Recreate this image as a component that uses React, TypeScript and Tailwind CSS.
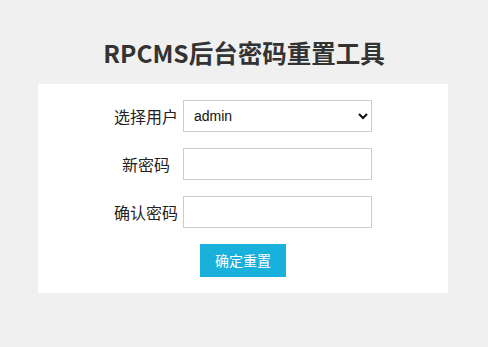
import React from 'react';

export default function App() {
  return (
    <div className="min-h-[347px] bg-[#f0f0f0] font-['Noto_Sans_CJK_SC','Noto_Sans',sans-serif] text-[#333]">
      <h1 className="pt-[34px] pb-[12px] text-center text-[24.5px] font-bold leading-[38px] text-[#333]">
        RPCMS后台密码重置工具
      </h1>
      <div className="ml-[38px] w-[410px] bg-white py-4">
        <div className="mx-auto grid w-[258px] grid-cols-[64px_189px] items-center gap-x-[5px] gap-y-4 text-[16px] text-[#222]">
          <span className="text-center leading-8">选择用户</span>
          <select className="h-8 w-[189px] border border-[#ccc] bg-white px-[6px] text-[14px] text-[#111] font-['Liberation_Sans',sans-serif]">
            <option>admin</option>
          </select>
          <span className="text-center leading-8">新密码</span>
          <input type="password" className="h-8 w-[189px] border border-[#ccc] bg-white px-2 outline-none" />
          <span className="text-center leading-8">确认密码</span>
          <input type="password" className="h-8 w-[189px] border border-[#ccc] bg-white px-2 outline-none" />
        </div>
        <div className="mt-4 flex justify-center">
          <button className="h-[33px] w-[86px] bg-[#1ab0dc] text-[14px] text-white">确定重置</button>
        </div>
      </div>
    </div>
  );
}
